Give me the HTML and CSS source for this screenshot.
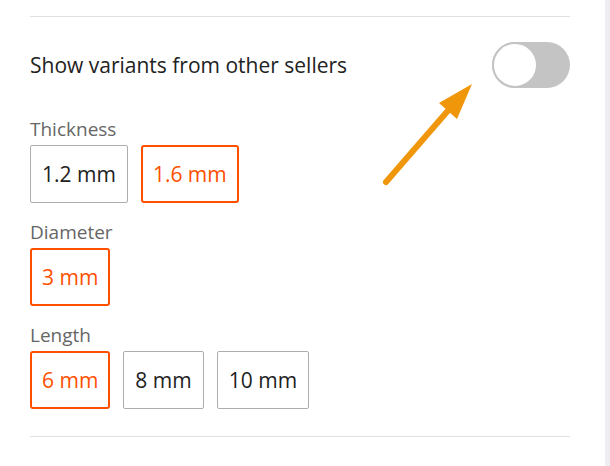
FILE: index.html
```html
<!DOCTYPE html>
<html lang="en">
<head>
  <meta charset="UTF-8">
  <title>Variants</title>
  <link rel="stylesheet" href="styles.css">
</head>
<body>
  <div class="page">
    <main class="panel">
      <hr class="divider">

      <div class="toggle-row">
        <span class="toggle-label">Show variants from other sellers</span>
        <span class="toggle"><span class="knob"></span></span>
      </div>

      <div class="group first">
        <div class="group-label">Thickness</div>
        <div class="options">
          <span class="option">1.2 mm</span>
          <span class="option selected">1.6 mm</span>
        </div>
      </div>

      <div class="group">
        <div class="group-label">Diameter</div>
        <div class="options">
          <span class="option selected">3 mm</span>
        </div>
      </div>

      <div class="group">
        <div class="group-label">Length</div>
        <div class="options">
          <span class="option selected">6 mm</span>
          <span class="option">8 mm</span>
          <span class="option">10 mm</span>
        </div>
      </div>

      <hr class="divider bottom">
    </main>
    <aside class="strip"></aside>
  </div>

  <!-- callout arrow pointing at the toggle -->
  <svg class="arrow" width="610" height="466" viewBox="0 0 610 466">
    <line x1="386" y1="182" x2="452" y2="106" stroke="#f0960a" stroke-width="6" stroke-linecap="round"/>
    <polygon points="472,84 439,103 457,119" fill="#f0960a"/>
  </svg>
</body>
</html>
```

FILE: styles.css
```css
body {
  margin: 0;
  font-family: "Open Sans", "Liberation Sans", sans-serif;
  color: #222;
  background: #fff;
}
.page {
  display: flex;
  height: 466px;
}
.panel {
  width: 540px;
  padding: 0 35px 0 30px;
}
.strip {
  width: 5px;
  background: #eceef1;
}
.divider {
  margin: 16px 0 0;
  border: none;
  border-top: 1px solid #e0e0e0;
}
.divider.bottom {
  margin-top: 27px;
}
.toggle-row {
  display: flex;
  align-items: center;
  justify-content: space-between;
  margin-top: 25px;
}
.toggle-label {
  font-size: 21px;
}
.toggle {
  display: flex;
  width: 78px;
  height: 46px;
  border-radius: 23px;
  background: #c4c4c4;
}
.knob {
  box-sizing: border-box;
  width: 46px;
  height: 46px;
  border-radius: 50%;
  background: #fff;
  border: 2px solid #c4c4c4;
}
.group {
  margin-top: 17px;
}
.group.first {
  margin-top: 29px;
}
.group-label {
  font-size: 19px;
  line-height: 24px;
  color: #666;
  margin-bottom: 4px;
}
.options {
  display: flex;
  gap: 13px;
}
.option {
  box-sizing: border-box;
  display: flex;
  align-items: center;
  height: 58px;
  padding: 0 11px;
  border: 1px solid #adadad;
  border-radius: 2px;
  font-size: 21px;
  color: #222;
}
.option.selected {
  padding: 0 10px;
  border: 2px solid #ff5000;
  border-radius: 3px;
  color: #ff5000;
}
.arrow {
  position: absolute;
  left: 0;
  top: 0;
  pointer-events: none;
}
```
